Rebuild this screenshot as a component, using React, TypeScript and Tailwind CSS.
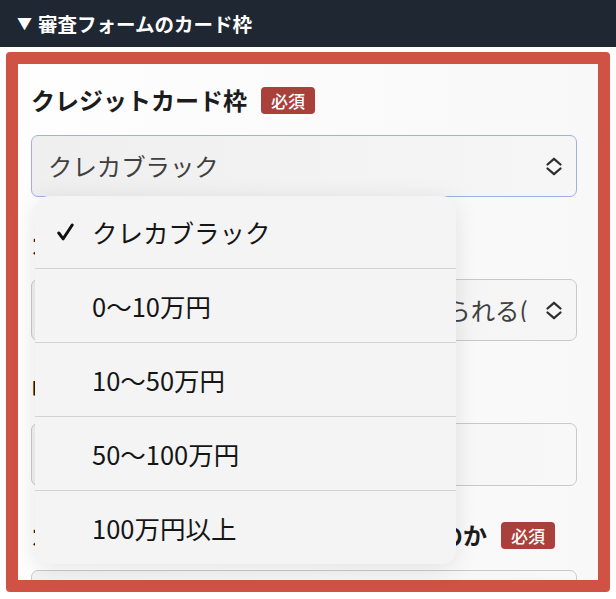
import React from "react";

const Chevron = () => (
  <svg width="18" height="19" viewBox="0 0 18 19" fill="none" stroke="#2f2f2f" strokeWidth="2.3" strokeLinecap="round" strokeLinejoin="round">
    <path d="M2.5 7.5 L9 1.8 L15.5 7.5" />
    <path d="M2.5 11.5 L9 17.2 L15.5 11.5" />
  </svg>
);

const Badge = () => (
  <span className="ml-[14px] inline-flex h-[27px] w-[54px] shrink-0 items-center justify-center rounded-[4px] bg-[#a9403c] text-[17px] font-medium leading-none text-white">
    必須
  </span>
);

const Label = ({ text }: { text: string }) => (
  <div className="flex h-[30px] items-center">
    <span className="whitespace-nowrap text-[24px] font-bold leading-none text-[#1c1c1c]">{text}</span>
    <Badge />
  </div>
);

const SelectBox = ({ text, focused, shifted }: { text: string; focused?: boolean; shifted?: boolean }) => (
  <div
    className={
      focused
        ? "mt-[20px] flex h-[62px] items-center rounded-[7px] border border-[#9db1e2] bg-gradient-to-r from-[#efefef] to-[#f6f6f6] pl-[16px] pr-[13px]"
        : "mt-[20px] flex h-[62px] items-center rounded-[7px] border border-[#c9c9c9] bg-gradient-to-r from-[#f1f1f1] to-[#f6f6f6] pl-[16px] pr-[13px]"
    }
  >
    <span
      className={
        shifted
          ? "mr-[17px] min-w-0 flex-1 overflow-hidden whitespace-nowrap pl-[8px] text-[24.4px] leading-none text-[#404040]"
          : "mr-[5px] min-w-0 flex-1 overflow-hidden whitespace-nowrap text-[24.4px] leading-none text-[#404040]"
      }
    >
      {text}
    </span>
    <Chevron />
  </div>
);

const items = ["クレカブラック", "0〜10万円", "10〜50万円", "50〜100万円", "100万円以上"];

export default function App() {
  return (
    <div className="relative h-[599px] w-[616px] overflow-hidden bg-white" style={{ fontFamily: '"Noto Sans CJK JP", "Noto Sans", sans-serif' }}>
      <div className="flex h-[47px] items-center bg-[#1f2733] pl-[17px] text-[19.5px] font-bold text-white">
        <span className="mr-[6px] text-[15px]">▼</span>
        <span>審査フォームのカード枠</span>
      </div>
      <div className="mx-[6px] mt-[5px] h-[540px] overflow-hidden rounded-[4px] border-[12px] border-[#d05245] bg-gradient-to-r from-[#fefefe] to-[#f8f8f8]">
        <div className="flex flex-col pl-[13px] pr-[21px] pt-[21px]">
          <Label text="クレジットカード枠" />
          <SelectBox text="クレカブラック" focused />
          <div className="mt-[32px]">
            <Label text="カード選びで重視すること" />
          </div>
          <SelectBox text="流通系など審査に通りやすいと考えられる(流通系)" shifted />
          <div className="mt-[32px]">
            <Label text="申込者の年収" />
          </div>
          <div className="mt-[20px] h-[63px] rounded-[7px] border border-[#c9c9c9] bg-gradient-to-r from-[#f3f3f3] to-[#f8f8f8]" />
          <div className="mt-[34px] flex">
            <Label text="カードを主にどういう目的で使用するのか" />
          </div>
          <div className="mt-[20px] h-[63px] rounded-[7px] border border-[#c9c9c9] bg-gradient-to-r from-[#f3f3f3] to-[#f8f8f8]" />
        </div>
      </div>

      <div className="absolute left-[35px] top-[196px] w-[421px] overflow-hidden rounded-[14px] bg-[#f4f4f4] shadow-[0_4px_24px_rgba(0,0,0,0.10)]">
        {items.map((it, i) => (
          <div
            key={it}
            className={
              i === 0
                ? "flex h-[72px] items-center pl-[22px]"
                : "flex h-[74px] items-center border-t border-[#d3d3d3] pl-[22px]"
            }
          >
            <span className="flex w-[35px] items-center">
              {i === 0 && (
                <svg width="17" height="18" viewBox="0 0 17 18" fill="none" stroke="#111" strokeWidth="3" strokeLinecap="round" strokeLinejoin="round">
                  <path d="M1.8 10 L6.2 15.8 L15.2 2" />
                </svg>
              )}
            </span>
            <span className="text-[25.5px] leading-none text-[#151515]">{it}</span>
          </div>
        ))}
      </div>
    </div>
  );
}
